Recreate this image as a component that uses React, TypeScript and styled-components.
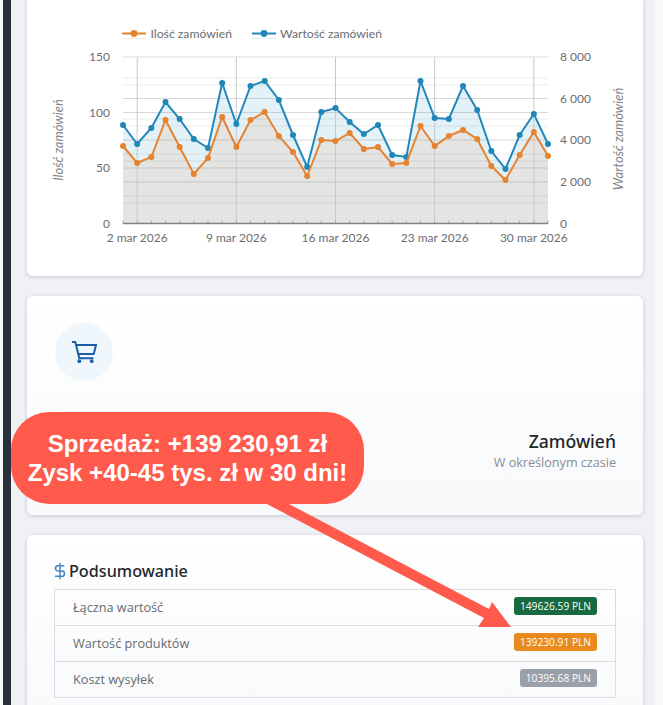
import { FC } from "react";
import styled, { createGlobalStyle } from "styled-components";
import { DollarSign } from "lucide-react";

const GlobalStyle = createGlobalStyle`
html, body {
  margin: 0;
  padding: 0;
  background: #f0f1f5;
}
`

const Frame = styled.div`
position: relative;
width: 663px;
height: 705px;
display: flex;
overflow: hidden;
background: #f0f1f5;
font-family: "Open Sans", "Noto Sans", sans-serif;
`
const EdgeLeft = styled.div`
width: 3px;
background: #f7f8fa;
`
const Rail = styled.div`
width: 8px;
background: #2b303b;
`
const Main = styled.main`
flex: 1;
min-width: 0;
padding: 0 12px 0 16px;
display: flex;
flex-direction: column;
gap: 20px;
`
const EdgeRight = styled.div`
width: 8px;
background: #f7f8fa;
`
const Card = styled.section`
background: linear-gradient(180deg, #ffffff 0%, #f8f9fb 100%);
border-radius: 6px;
box-shadow: 0 1px 4px rgba(60, 66, 80, 0.22);
flex-shrink: 0;
`
const ChartCard = styled(Card)`
height: 276px;
border-radius: 0 0 6px 6px;
background: #ffffff;
svg {
  display: block;
}
`
const StatCard = styled(Card)`
height: 219px;
box-sizing: border-box;
padding: 27px 27px 0 28px;
display: flex;
flex-direction: column;
`
const IconCircle = styled.div`
width: 58px;
height: 58px;
border-radius: 50%;
background: #eff7fc;
color: #1c5ea6;
display: flex;
align-items: center;
justify-content: center;
`
const StatText = styled.div`
margin-top: 48px;
text-align: right;
`
const StatTitle = styled.div`
font-family: "Noto Sans", "Open Sans", sans-serif;
font-size: 17.6px;
line-height: 24px;
font-weight: 500;
color: #23262b;
`
const StatCaption = styled.div`
font-size: 12.6px;
line-height: 18px;
margin-top: 1px;
color: #878c94;
`
const SummaryCard = styled(Card)`
padding: 26px 27px 28px 27px;
`
const SummaryTitle = styled.h3`
margin: 0 0 8px;
font-family: "Noto Sans", "Open Sans", sans-serif;
font-size: 16.2px;
line-height: 20px;
font-weight: 500;
color: #23262b;
display: flex;
align-items: center;
gap: 0.5px;
svg {
  color: #3f86c6;
  margin-left: -3.5px;
}
`
const SummaryTable = styled.div`
border: 1px solid #d9dce3;
`
const SummaryRow = styled.div`
height: 35px;
box-sizing: border-box;
padding: 0 18px 2px;
display: flex;
align-items: center;
justify-content: space-between;
font-size: 12.7px;
color: #666b73;
& + & {
  border-top: 1px solid #d9dce3;
  height: 36px;
}
`
const Badge = styled.span<{ $bg: string }>`
background: ${(p) => p.$bg};
color: #fff;
font-size: 10.2px;
line-height: 18px;
padding: 0 6px;
margin-bottom: 2px;
border-radius: 3px;
`
const Callout = styled.div`
position: absolute;
left: 11px;
top: 412px;
width: 353px;
height: 92px;
border-radius: 38px;
background: #ff5a4b;
color: #fff;
font-family: "Liberation Sans", Arial, sans-serif;
font-size: 24px;
line-height: 29px;
font-weight: 700;
display: flex;
flex-direction: column;
align-items: center;
justify-content: center;
`
const ArrowLayer = styled.svg`
position: absolute;
left: 0;
top: 0;
pointer-events: none;
`

const orange = [146, 163, 157, 120, 147, 174, 158, 117, 147, 120, 112, 136, 152, 176, 140, 141, 133, 149, 147, 164, 163, 126, 146, 136, 130, 139, 166, 180, 155, 132, 156]
const blue = [125, 144, 128, 102, 119, 139, 148, 83, 124, 86, 81, 100, 135, 167, 112, 108, 122, 134, 125, 155, 157, 81, 118, 119, 86, 110, 151, 169, 135, 114, 144]

const plotLeft = 123
const plotRight = 548
const plotTop = 57
const plotBottom = 223.5
const stepX = (plotRight - plotLeft) / 30
const xAt = (i: number) => plotLeft + i * stepX
const linePoints = (ys: number[]) => ys.map((y, i) => `${xAt(i)},${y}`).join(" ")
const areaPoints = (ys: number[]) => `${plotLeft},${plotBottom} ${linePoints(ys)} ${plotRight},${plotBottom}`

const majorY = [57, 98.5, 112.5, 140, 168, 182]
const minorY = [78, 85, 119, 126, 154, 161, 196, 203]
const weeks = [
  { i: 1, label: "2 mar 2026" },
  { i: 8, label: "9 mar 2026" },
  { i: 15, label: "16 mar 2026" },
  { i: 22, label: "23 mar 2026" },
  { i: 29, label: "30 mar 2026" },
]
const leftTicks = [
  { y: 57, label: "150" },
  { y: 112.5, label: "100" },
  { y: 168, label: "50" },
  { y: 223.5, label: "0" },
]
const rightTicks = [
  { y: 57, label: "8 000" },
  { y: 98.5, label: "6 000" },
  { y: 140, label: "4 000" },
  { y: 182, label: "2 000" },
  { y: 223.5, label: "0" },
]

const chartFont = { fontFamily: "Lato, sans-serif", fontSize: 12, fill: "#6a6e73" }

const CartIcon: FC = () => (
  <svg width="26" height="24" viewBox="0 0 26 24" fill="none" stroke="currentColor" strokeWidth="2">
    <path d="M1 2h3.3l4 16.3h14.2" />
    <path d="M5 5h20l-2.3 9H7.3" />
    <circle cx="8.3" cy="21.2" r="1.9" fill="currentColor" stroke="none" />
    <circle cx="20.7" cy="21.2" r="1.9" fill="currentColor" stroke="none" />
  </svg>
)

const OrdersChart: FC = () => {
  return (
    <svg width="616" height="276" viewBox="27 0 616 276">
      <rect x="122" y="38" width="24" height="1" fill="#fbe9d8" />
      <line x1="122" y1="33.5" x2="146" y2="33.5" stroke="#e58330" strokeWidth="2" />
      <circle cx="134" cy="33.5" r="3.4" fill="#e58330" />
      <text x="150.5" y="37.5" {...chartFont} fontSize="12.2">Ilość zamówień</text>
      <rect x="252" y="38" width="24" height="1" fill="#dceef7" />
      <line x1="252" y1="33.5" x2="276" y2="33.5" stroke="#2288b9" strokeWidth="2" />
      <circle cx="264" cy="33.5" r="3.4" fill="#2288b9" />
      <text x="280" y="37.5" {...chartFont} fontSize="12.2">Wartość zamówień</text>

      <polygon points={areaPoints(blue)} fill="#e3f1f8" />
      <polygon points={areaPoints(orange)} fill="#e4e5e2" />

      {minorY.map((y) => (
        <line key={y} x1={plotLeft} x2={plotRight} y1={y} y2={y} stroke="#787878" strokeOpacity="0.14" />
      ))}
      {majorY.map((y) => (
        <line key={y} x1={plotLeft} x2={plotRight} y1={y} y2={y} stroke="#787878" strokeOpacity="0.28" />
      ))}
      {weeks.map((w) => (
        <line key={w.i} x1={xAt(w.i)} x2={xAt(w.i)} y1={plotTop} y2={plotBottom} stroke="#c8c9ca" />
      ))}
      {orange.map((_, i) => (
        <line key={i} x1={xAt(i)} x2={xAt(i)} y1={plotBottom - 3} y2={plotBottom} stroke="#a8a9a9" />
      ))}
      <line x1={plotLeft} x2={plotRight} y1={plotBottom} y2={plotBottom} stroke="#7f8082" strokeWidth="1.5" />

      <polyline points={linePoints(blue)} fill="none" stroke="#2288b9" strokeWidth="2" />
      {blue.map((y, i) => (
        <circle key={i} cx={xAt(i)} cy={y} r="3" fill="#1f86b8" />
      ))}
      <polyline points={linePoints(orange)} fill="none" stroke="#e58330" strokeWidth="2" />
      {orange.map((y, i) => (
        <circle key={i} cx={xAt(i)} cy={y} r="3" fill="#e58330" />
      ))}

      {leftTicks.map((t) => (
        <text key={t.label} x="110" y={t.y + 4} textAnchor="end" {...chartFont}>{t.label}</text>
      ))}
      {rightTicks.map((t) => (
        <text key={t.label + t.y} x="560" y={t.y + 4} {...chartFont}>{t.label}</text>
      ))}
      {weeks.map((w) => (
        <text key={w.i} x={xAt(w.i)} y="241.5" textAnchor="middle" {...chartFont}>{w.label}</text>
      ))}
      <text transform="translate(63 140) rotate(-90)" textAnchor="middle" {...chartFont} fill="#808387" fontSize="13" fontStyle="italic">Ilość zamówień</text>
      <text transform="translate(622.5 139) rotate(-90)" textAnchor="middle" {...chartFont} fill="#808387" fontSize="13" fontStyle="italic">Wartość zamówień</text>
    </svg>
  )
}

export default function App() {
  return (
    <Frame>
      <GlobalStyle />
      <EdgeLeft />
      <Rail />
      <Main>
        <ChartCard>
          <OrdersChart />
        </ChartCard>
        <StatCard>
          <IconCircle>
            <CartIcon />
          </IconCircle>
          <StatText>
            <StatTitle>Zamówień</StatTitle>
            <StatCaption>W określonym czasie</StatCaption>
          </StatText>
        </StatCard>
        <SummaryCard>
          <SummaryTitle>
            <DollarSign size={18} strokeWidth={2} />
            Podsumowanie
          </SummaryTitle>
          <SummaryTable>
            <SummaryRow>
              Łączna wartość
              <Badge $bg="#18693f">149626.59 PLN</Badge>
            </SummaryRow>
            <SummaryRow>
              Wartość produktów
              <Badge $bg="#e88a1c">139230.91 PLN</Badge>
            </SummaryRow>
            <SummaryRow>
              Koszt wysyłek
              <Badge $bg="#9aa0aa">10395.68 PLN</Badge>
            </SummaryRow>
          </SummaryTable>
        </SummaryCard>
      </Main>
      <EdgeRight />
      <ArrowLayer width="663" height="705" viewBox="0 0 663 705">
        <polygon points="265,503 287,503 489,609 492,602 511,627 478,627 484,618" fill="#ff5a4b" />
      </ArrowLayer>
      <Callout>
        <div>Sprzedaż: +139 230,91 zł</div>
        <div>Zysk +40-45 tys. zł w 30 dni!</div>
      </Callout>
    </Frame>
  )
}
